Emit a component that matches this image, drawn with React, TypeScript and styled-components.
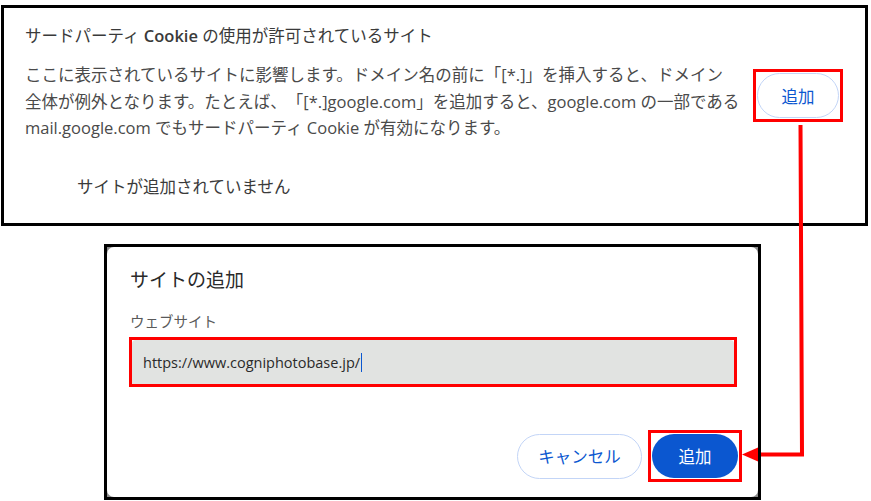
import React from "react";
import styled, { createGlobalStyle } from "styled-components";

const GlobalStyle = createGlobalStyle`
  html, body {
    margin: 0;
    padding: 0;
    background: #ffffff;
  }
  * {
    box-sizing: border-box;
  }
  body {
    font-family: "Open Sans", "Noto Sans CJK JP", sans-serif;
    text-spacing-trim: space-all;
  }
`;

const Page = styled.div`
  position: relative;
  width: 871px;
  height: 501px;
  padding: 5px 0 0 1px;
  overflow: hidden;
`;

const SettingsPanel = styled.section`
  width: 867px;
  height: 221px;
  border: 3px solid #000;
  background: #fff;
  padding: 16px 22px 0 21px;
  display: flex;
  flex-direction: column;
`;

const PanelTitle = styled.h2`
  margin: 0;
  font-size: 16.5px;
  line-height: 24px;
  font-weight: 400;
  color: #3a3a3a;
  white-space: nowrap;
`;

const Strong = styled.span`
  font-weight: 600;
`;

const DescriptionRow = styled.div`
  display: flex;
  align-items: flex-start;
  justify-content: space-between;
  margin-top: 14px;
`;

const Description = styled.p`
  margin: 0;
  font-size: 16.5px;
  line-height: 26.5px;
  color: #4a4a4a;
  white-space: nowrap;
`;

const Highlight = styled.div<{ $offset?: number }>`
  border: 3px solid #ff0000;
  padding: 1px;
  margin-top: ${({ $offset }) => $offset ?? 0}px;
  display: flex;
`;

const OutlineButton = styled.button<{ $width: number }>`
  width: ${({ $width }) => $width}px;
  height: 45px;
  border: 1px solid #c3d5f7;
  border-radius: 23px;
  background: #fff;
  color: #0b57d0;
  font-family: "Open Sans", "Noto Sans CJK JP", sans-serif;
  font-size: 16.5px;
  padding: 0;
  cursor: pointer;
`;

const FilledButton = styled.button`
  width: 86px;
  height: 44px;
  border: none;
  border-radius: 22px;
  background: #0b57d0;
  color: #fff;
  font-family: "Open Sans", "Noto Sans CJK JP", sans-serif;
  font-size: 16.5px;
  padding: 0;
  cursor: pointer;
`;

const EmptyText = styled.div`
  margin: 33px 0 0 52px;
  font-size: 16.5px;
  line-height: 24px;
  color: #3a3a3a;
`;

const DialogFrame = styled.div`
  width: 657px;
  height: 256px;
  margin: 18px 0 0 103px;
  border: 3px solid #000;
  background: #8a8a8a;
`;

const Dialog = styled.div`
  width: 100%;
  height: 100%;
  background: #fff;
  border-radius: 7px;
  padding: 19px 16px 0 23px;
  display: flex;
  flex-direction: column;
`;

const DialogTitle = styled.h3`
  margin: 0;
  font-size: 19px;
  line-height: 28px;
  font-weight: 400;
  color: #2a2a2a;
`;

const FieldLabel = styled.label`
  margin-top: 18px;
  font-size: 14.5px;
  line-height: 20px;
  color: #5a5a5a;
`;

const InputHighlight = styled.div`
  width: 608px;
  height: 50px;
  margin: 5px 0 0 -1px;
  border: 3px solid #ff0000;
`;

const InputBox = styled.div`
  height: 100%;
  background: #e1e3e1;
  border-radius: 4px 4px 0 0;
  display: flex;
  align-items: center;
  padding-left: 11px;
  font-size: 14.5px;
  color: #2a2a2a;
`;

const Caret = styled.span`
  display: inline-block;
  width: 1px;
  height: 19px;
  margin-left: 1px;
  background: #0b57d0;
`;

const ButtonRow = styled.div`
  display: flex;
  justify-content: flex-end;
  align-items: center;
  gap: 6px;
  margin-top: 43px;
`;

const ArrowLayer = styled.svg`
  position: absolute;
  left: 0;
  top: 0;
  width: 871px;
  height: 501px;
  pointer-events: none;
`;

const App = () => {
  return (
    <>
      <GlobalStyle />
      <Page>
        <SettingsPanel>
          <PanelTitle>
            サードパーティ <Strong>Cookie</Strong> の使用が許可されているサイト
          </PanelTitle>
          <DescriptionRow>
            <Description>
              ここに表示されているサイトに影響します。ドメイン名の前に「[*.]」を挿入すると、ドメイン
              <br />
              全体が例外となります。たとえば、「[*.]google.com」を追加すると、google.com の一部である
              <br />
              mail.google.com でもサードパーティ Cookie が有効になります。
            </Description>
            <Highlight $offset={7}>
              <OutlineButton $width={82}>追加</OutlineButton>
            </Highlight>
          </DescriptionRow>
          <EmptyText>サイトが追加されていません</EmptyText>
        </SettingsPanel>

        <DialogFrame>
          <Dialog>
            <DialogTitle>サイトの追加</DialogTitle>
            <FieldLabel>ウェブサイト</FieldLabel>
            <InputHighlight>
              <InputBox>
                https://www.cogniphotobase.jp/
                <Caret />
              </InputBox>
            </InputHighlight>
            <ButtonRow>
              <OutlineButton $width={125}>キャンセル</OutlineButton>
              <Highlight>
                <FilledButton>追加</FilledButton>
              </Highlight>
            </ButtonRow>
          </Dialog>
        </DialogFrame>

        <ArrowLayer viewBox="0 0 871 501">
          <polyline
            points="800.5,125 802,454.5 756,454.5"
            fill="none"
            stroke="#ff0000"
            strokeWidth="4"
          />
          <polygon points="742,454.5 758,447.5 758,461.5" fill="#ff0000" />
          <line x1="759.5" y1="440" x2="759.5" y2="470" stroke="#000" strokeWidth="3" />
        </ArrowLayer>
      </Page>
    </>
  );
};

export default App;
